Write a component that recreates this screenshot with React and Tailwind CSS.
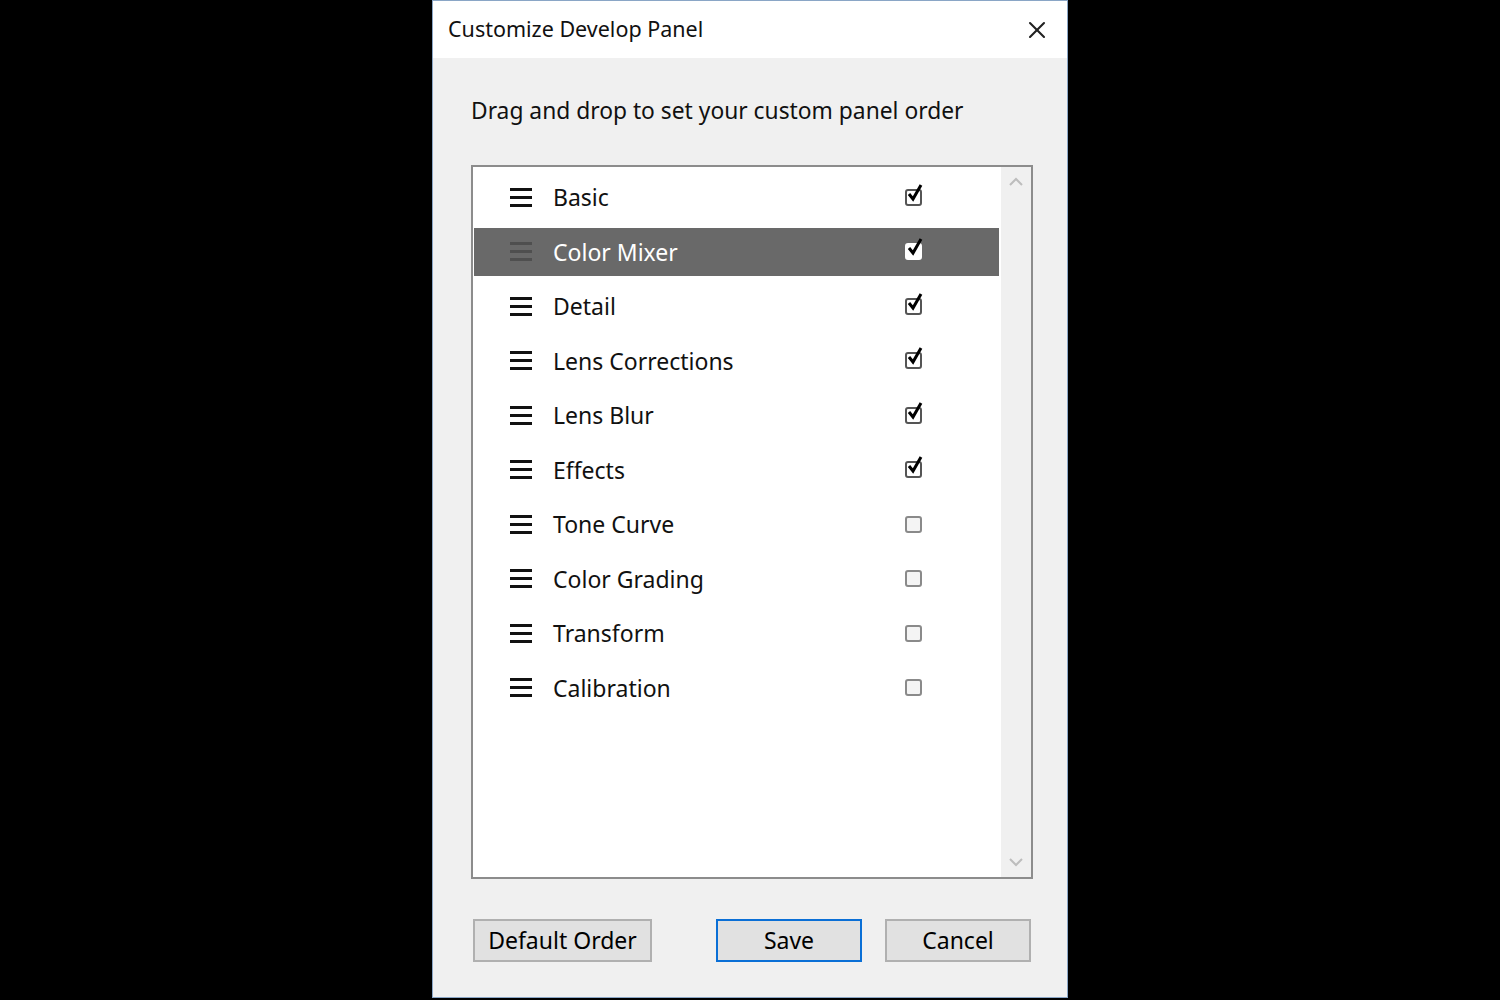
import { X } from 'lucide-react'

const items = [
  { name: 'Basic', on: true },
  { name: 'Color Mixer', on: true, sel: true },
  { name: 'Detail', on: true },
  { name: 'Lens Corrections', on: true },
  { name: 'Lens Blur', on: true },
  { name: 'Effects', on: true },
  { name: 'Tone Curve', on: false },
  { name: 'Color Grading', on: false },
  { name: 'Transform', on: false },
  { name: 'Calibration', on: false },
]

function Grip({ sel }) {
  const c = sel ? 'bg-[#4f4f4f]' : 'bg-[#111]'
  return (
    <div className="flex flex-col gap-[5px] w-[22px]">
      <span className={`h-[3px] ${c}`} />
      <span className={`h-[3px] ${c}`} />
      <span className={`h-[3px] ${c}`} />
    </div>
  )
}

function Check({ on, sel }) {
  return (
    <div className="relative w-[17px] h-[17px]">
      <div
        className={`absolute inset-0 rounded-[3px] border-2 ${
          sel ? 'bg-white border-white' : on ? 'bg-white border-[#555]' : 'bg-[#f4f4f4] border-[#8a8a8a]'
        }`}
      />
      {on && (
        <svg className="absolute left-[2px] -top-[5px]" width="16" height="18" viewBox="0 0 16 18">
          <path d="M2 10 L6 15 L14 1" fill="none" stroke="#000" strokeWidth="3" strokeLinejoin="miter" />
        </svg>
      )}
    </div>
  )
}

function Btn({ children, primary, w }) {
  return (
    <button
      className={`h-[43px] ${w} text-[23px] text-black bg-[#e1e1e1] ${
        primary ? 'border-2 border-[#0a6fd6]' : 'border-2 border-[#b0b0b0]'
      }`}
    >
      {children}
    </button>
  )
}

export default function App() {
  return (
    <div
      className="w-[1500px] h-[1000px] bg-black flex justify-center"
      style={{ fontFamily: '"Noto Sans", "Liberation Sans", sans-serif' }}
    >
      <div className="w-[636px] h-[998px] border border-[#8aa6c6] bg-[#f0f0f0] flex flex-col">
        <div className="h-[57px] bg-white flex items-center justify-between pl-[15px] pr-[16px]">
          <span className="text-[21.5px] text-[#111]">Customize Develop Panel</span>
          <X className="w-[28px] h-[28px] text-[#222]" strokeWidth={1.8} />
        </div>
        <div className="flex-1 flex flex-col pl-[38px] pr-[34px]">
          <div className="mt-[38px] h-[30px] flex items-center text-[22.8px] text-[#111]">
            Drag and drop to set your custom panel order
          </div>
          <div className="mt-[39px] h-[714px] border-2 border-[#8c8c8c] bg-white flex">
            <div className="flex-1 pt-[3px] pl-[1px] pr-[2px]">
              {items.map((it) => (
                <div key={it.name} className="h-[54.5px] py-[3.5px]">
                  <div
                    className={`h-full flex items-center pl-[36px] ${it.sel ? 'bg-[#696969] text-white' : 'text-[#111]'}`}
                  >
                    <Grip sel={it.sel} />
                    <span className="ml-[21px] text-[23px] flex-1">{it.name}</span>
                    <div className="mr-[77px]">
                      <Check on={it.on} sel={it.sel} />
                    </div>
                  </div>
                </div>
              ))}
            </div>
            <div className="w-[30px] bg-[#f0f0f0] flex flex-col items-center justify-between py-[10px]">
              <svg width="14" height="10" viewBox="0 0 14 10">
                <path d="M1 8 L7 2 L13 8" fill="none" stroke="#bdbdbd" strokeWidth="2" />
              </svg>
              <svg width="14" height="10" viewBox="0 0 14 10">
                <path d="M1 2 L7 8 L13 2" fill="none" stroke="#bdbdbd" strokeWidth="2" />
              </svg>
            </div>
          </div>
          <div className="mt-[40px] ml-[2px] flex items-center">
            <Btn w="w-[179px]">Default Order</Btn>
            <div className="ml-[64px]">
              <Btn primary w="w-[146px]">Save</Btn>
            </div>
            <div className="ml-[23px]">
              <Btn w="w-[146px]">Cancel</Btn>
            </div>
          </div>
        </div>
      </div>
    </div>
  )
}
